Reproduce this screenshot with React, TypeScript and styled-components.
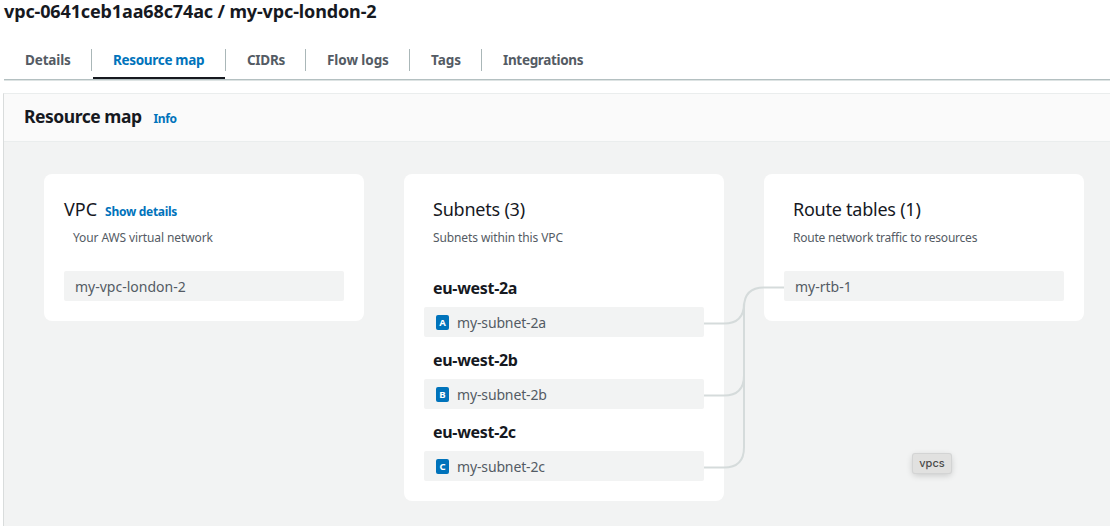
import React from "react";
import styled, { createGlobalStyle } from "styled-components";

const GlobalStyle = createGlobalStyle`
  *, *::before, *::after { box-sizing: border-box; }
  body {
    margin: 0;
    background: #fff;
    color: #16191f;
    font-family: "Noto Sans", "Open Sans", sans-serif;
    overflow: hidden;
  }
  h1, h2, h3, h4, p, ul { margin: 0; padding: 0; }
`;

const Page = styled.main`
  width: 1110px;
  height: 526px;
  padding-left: 4px;
  display: flex;
  flex-direction: column;
  overflow: hidden;
`;

const PageTitle = styled.h1<{ $track: number }>`
  height: 40px;
  line-height: 22px;
  font-size: 18px;
  font-weight: 700;
  white-space: nowrap;
  letter-spacing: ${(p) => p.$track}px;
`;

const TabBar = styled.nav`
  flex: none;
  height: 40px;
  display: flex;
  border-bottom: 1px solid #b4c0c1;
  box-shadow: 0 1px 0 #dde3e3;
`;

const Tab = styled.a<{ $width: number; $active?: boolean; $track: number }>`
  position: relative;
  width: ${(p) => p.$width}px;
  padding-left: 21px;
  line-height: 40px;
  font-size: 13.5px;
  font-weight: 700;
  white-space: nowrap;
  letter-spacing: ${(p) => p.$track}px;
  color: ${(p) => (p.$active ? "#0073bb" : "#545b64")};

  &:not(:last-child)::after {
    content: "";
    position: absolute;
    right: 0;
    top: 9px;
    width: 1px;
    height: 22px;
    background: #aab7b8;
  }
  &::before {
    content: "";
    display: ${(p) => (p.$active ? "block" : "none")};
    position: absolute;
    left: 1px;
    right: 1px;
    bottom: 0;
    height: 2px;
    background: #16191f;
  }
`;

const Panel = styled.section`
  flex: 1;
  margin: 13px 0 0 -1px;
  display: flex;
  flex-direction: column;
  border-top: 1px solid #eaeded;
  border-left: 1px solid #d9dcdc;
`;

const PanelHeader = styled.header`
  height: 48px;
  padding: 0 20px 0 20px;
  display: flex;
  align-items: baseline;
  gap: 12px;
  line-height: 44px;
  background: #fafafa;
  border-bottom: 1px solid #eaeded;
`;

const PanelTitle = styled.h2<{ $track: number }>`
  font-size: 17.5px;
  font-weight: 700;
  letter-spacing: ${(p) => p.$track}px;
`;

const Link = styled.a<{ $track: number }>`
  font-size: 12px;
  font-weight: 700;
  color: #0073bb;
  letter-spacing: ${(p) => p.$track}px;
`;

const MapArea = styled.div`
  position: relative;
  flex: 1;
  padding: 32px 26px 0 40px;
  display: flex;
  align-items: flex-start;
  gap: 40px;
  background: #f2f3f3;
`;

const Card = styled.article`
  width: 320px;
  padding: 20px;
  border-radius: 8px;
  background: #fff;
`;

const CardHeading = styled.div<{ $inset: number }>`
  height: 32px;
  padding-left: ${(p) => p.$inset}px;
  display: flex;
  align-items: baseline;
  gap: 8px;
  line-height: 30px;
`;

const CardTitle = styled.h3<{ $track: number }>`
  font-size: 18px;
  font-weight: 400;
  letter-spacing: ${(p) => p.$track}px;
`;

const CardNote = styled.p<{ $track: number }>`
  height: 45px;
  padding-left: 9px;
  line-height: 24px;
  font-size: 12px;
  color: #545b64;
  letter-spacing: ${(p) => p.$track}px;
`;

const ZoneName = styled.h4<{ $track: number }>`
  height: 36px;
  padding-left: 9px;
  line-height: 35px;
  font-size: 16px;
  font-weight: 700;
  letter-spacing: ${(p) => p.$track}px;
`;

const ZoneGroup = styled.div`
  & + & { margin-top: 6px; }
`;

const Resource = styled.div<{ $track: number }>`
  height: 30px;
  padding-left: 11px;
  display: flex;
  align-items: center;
  gap: 8px;
  border-radius: 2px;
  background: #f2f3f3;
  color: #545b64;
  font-size: 14px;
  letter-spacing: ${(p) => p.$track}px;
`;

const ResourceName = styled.span`
  padding-top: 2px;
  line-height: 30px;
`;

const ZoneBadge = styled.span`
  width: 13px;
  height: 15px;
  margin-left: 1px;
  border-radius: 2px;
  background: #0073bb;
  color: #fff;
  font-size: 9.5px;
  font-weight: 700;
  line-height: 15px;
  text-align: center;
  letter-spacing: 0;
`;

const Connectors = styled.svg`
  position: absolute;
  left: 700px;
  top: 142px;
  pointer-events: none;
`;

const Tooltip = styled.div`
  position: absolute;
  left: 909px;
  top: 312px;
  width: 38px;
  height: 19px;
  border-radius: 2px;
  background: #e1e1e0;
  box-shadow: 0 0 0 1px #d3d4d4, 0 2px 7px rgba(0, 0, 0, 0.2);
  color: #4b4b4b;
  font: 500 11px/19px Inter, sans-serif;
  text-align: center;
`;

const tabs = [
  { label: "Details", width: 88, track: -0.15 },
  { label: "Resource map", width: 134, track: -0.32, active: true },
  { label: "CIDRs", width: 80, track: -0.3 },
  { label: "Flow logs", width: 104, track: -0.07 },
  { label: "Tags", width: 72, track: 0 },
  { label: "Integrations", width: 120, track: -0.33 },
];

const zones = [
  { name: "eu-west-2a", subnet: "my-subnet-2a", letter: "A" },
  { name: "eu-west-2b", subnet: "my-subnet-2b", letter: "B" },
  { name: "eu-west-2c", subnet: "my-subnet-2c", letter: "C" },
];

export default function App() {
  return (
    <Page>
      <GlobalStyle />
      <PageTitle $track={-0.13}>vpc-0641ceb1aa68c74ac / my-vpc-london-2</PageTitle>
      <TabBar>
        {tabs.map((t) => (
          <Tab key={t.label} $width={t.width} $track={t.track} $active={t.active}>
            {t.label}
          </Tab>
        ))}
      </TabBar>
      <Panel>
        <PanelHeader>
          <PanelTitle $track={-0.47}>Resource map</PanelTitle>
          <Link $track={-0.4}>Info</Link>
        </PanelHeader>
        <MapArea>
          <Card>
            <CardHeading $inset={0}>
              <CardTitle $track={0}>VPC</CardTitle>
              <Link $track={-0.28}>Show details</Link>
            </CardHeading>
            <CardNote $track={-0.11}>Your AWS virtual network</CardNote>
            <Resource $track={0}>
              <ResourceName>my-vpc-london-2</ResourceName>
            </Resource>
          </Card>
          <Card>
            <CardHeading $inset={9}>
              <CardTitle $track={-0.22}>Subnets (3)</CardTitle>
            </CardHeading>
            <CardNote $track={-0.11}>Subnets within this VPC</CardNote>
            {zones.map((z) => (
              <ZoneGroup key={z.name}>
                <ZoneName $track={-0.3}>{z.name}</ZoneName>
                <Resource $track={-0.14}>
                  <ZoneBadge>{z.letter}</ZoneBadge>
                  <ResourceName>{z.subnet}</ResourceName>
                </Resource>
              </ZoneGroup>
            ))}
          </Card>
          <Card>
            <CardHeading $inset={9}>
              <CardTitle $track={-0.24}>Route tables (1)</CardTitle>
            </CardHeading>
            <CardNote $track={-0.22}>Route network traffic to resources</CardNote>
            <Resource $track={0}>
              <ResourceName>my-rtb-1</ResourceName>
            </Resource>
          </Card>
          <Connectors width="80" height="186" viewBox="0 0 80 186" fill="none" stroke="#d5dbdb" strokeWidth="2">
            <path d="M0 39.5H20Q40 39.5 40 19.5" />
            <path d="M0 111.5H20Q40 111.5 40 91.5" />
            <path d="M0 183.5H20Q40 183.5 40 163.5V23.5Q40 3.5 60 3.5H80" />
          </Connectors>
          <Tooltip>vpcs</Tooltip>
        </MapArea>
      </Panel>
    </Page>
  );
}
